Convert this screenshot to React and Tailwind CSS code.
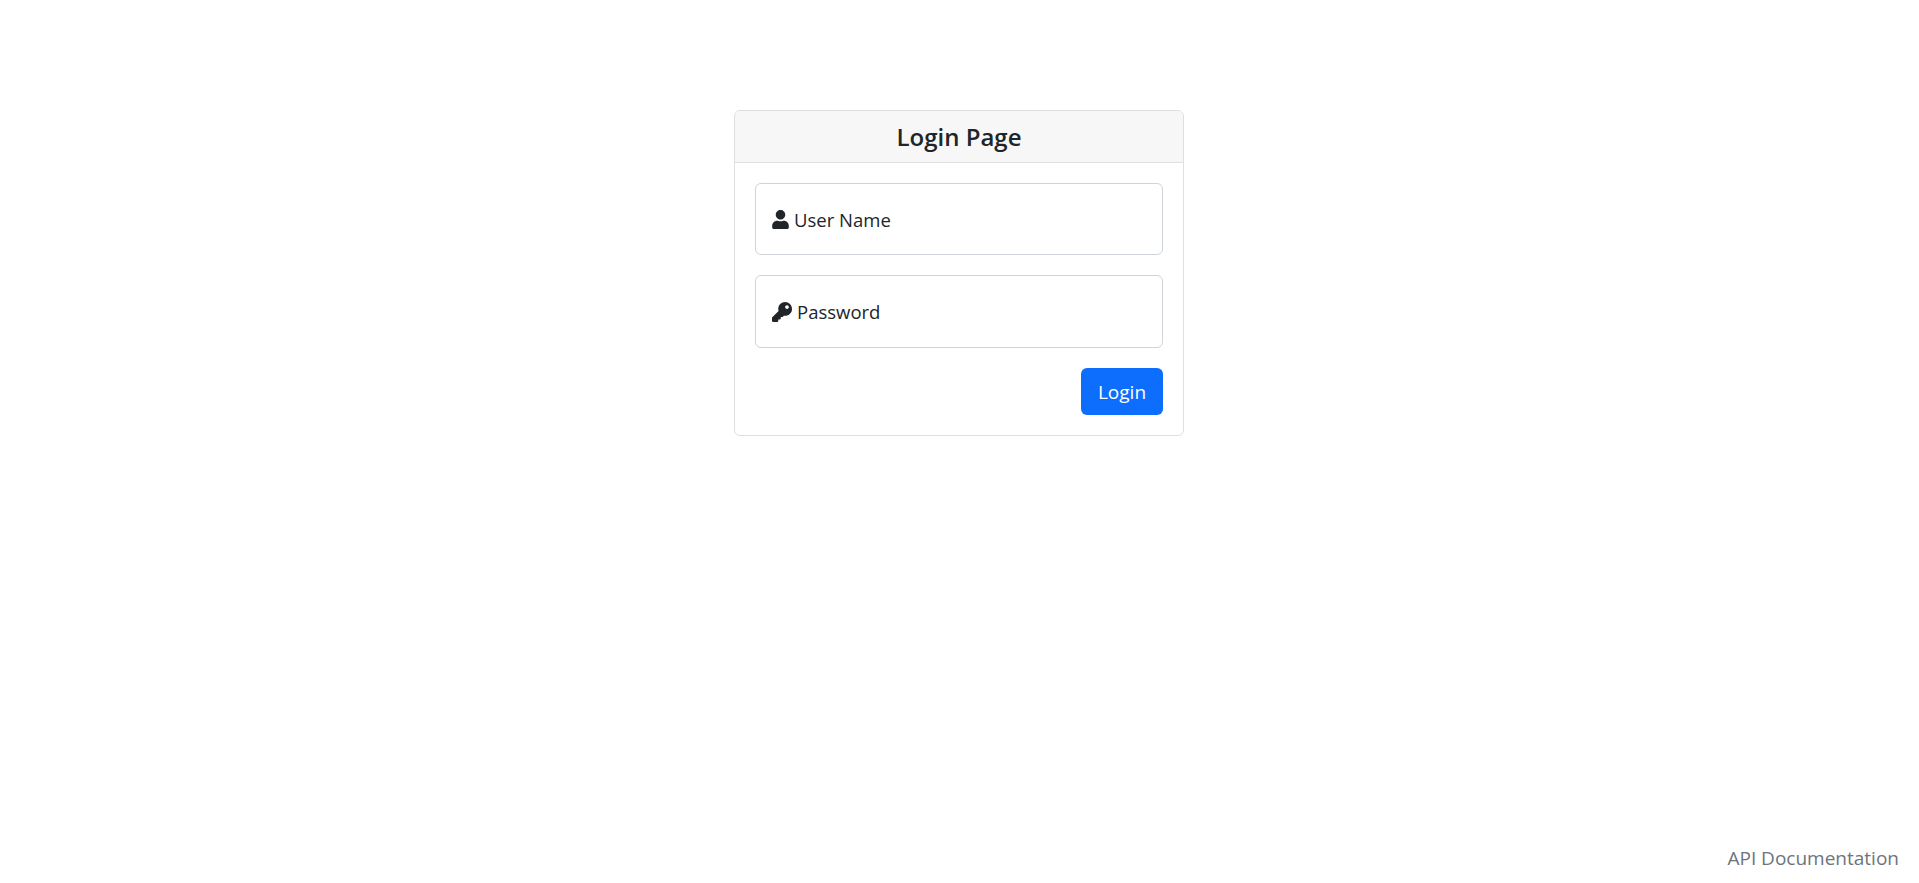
import { FaUser, FaKey } from 'react-icons/fa';

const font = "font-['Open_Sans','Noto_Sans',sans-serif]";

const Field = ({ icon, placeholder, type, className, inputClass }) => (
  <label className={`flex items-center w-full border border-[#ced4da] rounded-[6px] pl-[16px] pr-3 ${className}`}>
    {icon}
    <input
      type={type}
      placeholder={placeholder}
      className={`flex-1 min-w-0 bg-transparent outline-none text-[18.5px] text-[#212529] placeholder:text-[#212529] placeholder:opacity-100 ${inputClass}`}
    />
  </label>
);

const App = () => {
  return (
    <div className={`relative min-h-[883px] bg-white text-[#212529] ${font}`}>
      <div className="flex justify-center pt-[110px] pr-[1px]">
        <div className="w-[450px] border border-[#dfdfdf] rounded-[6px] bg-white">
          <div className="h-[52px] flex items-center justify-center pt-[1px] bg-[#f7f7f7] border-b border-[#dfdfdf] rounded-t-[6px]">
            <h1 className="text-[24px] font-semibold">Login Page</h1>
          </div>
          <form className="flex flex-col p-5">
            <Field
              className="h-[72px] mb-5 gap-[5px]"
              inputClass="pt-[2px]"
              type="text"
              placeholder="User Name"
              icon={<FaUser className="w-[17px] h-[19px] shrink-0" />}
            />
            <Field
              className="h-[73px] mb-5 gap-[5px]"
              type="password"
              placeholder="Password"
              icon={<FaKey className="w-[20px] h-[20px] shrink-0" />}
            />
            <div className="flex justify-end">
              <button type="button" className="w-[82px] h-[47px] pt-[1px] rounded-[6px] bg-[#0d6efd] text-white text-[19px]">
                Login
              </button>
            </div>
          </form>
        </div>
      </div>
      <a href="#api" className="absolute right-5 bottom-[11px] text-[#6c757d] text-[19px]">
        API Documentation
      </a>
    </div>
  );
};

export default App;
